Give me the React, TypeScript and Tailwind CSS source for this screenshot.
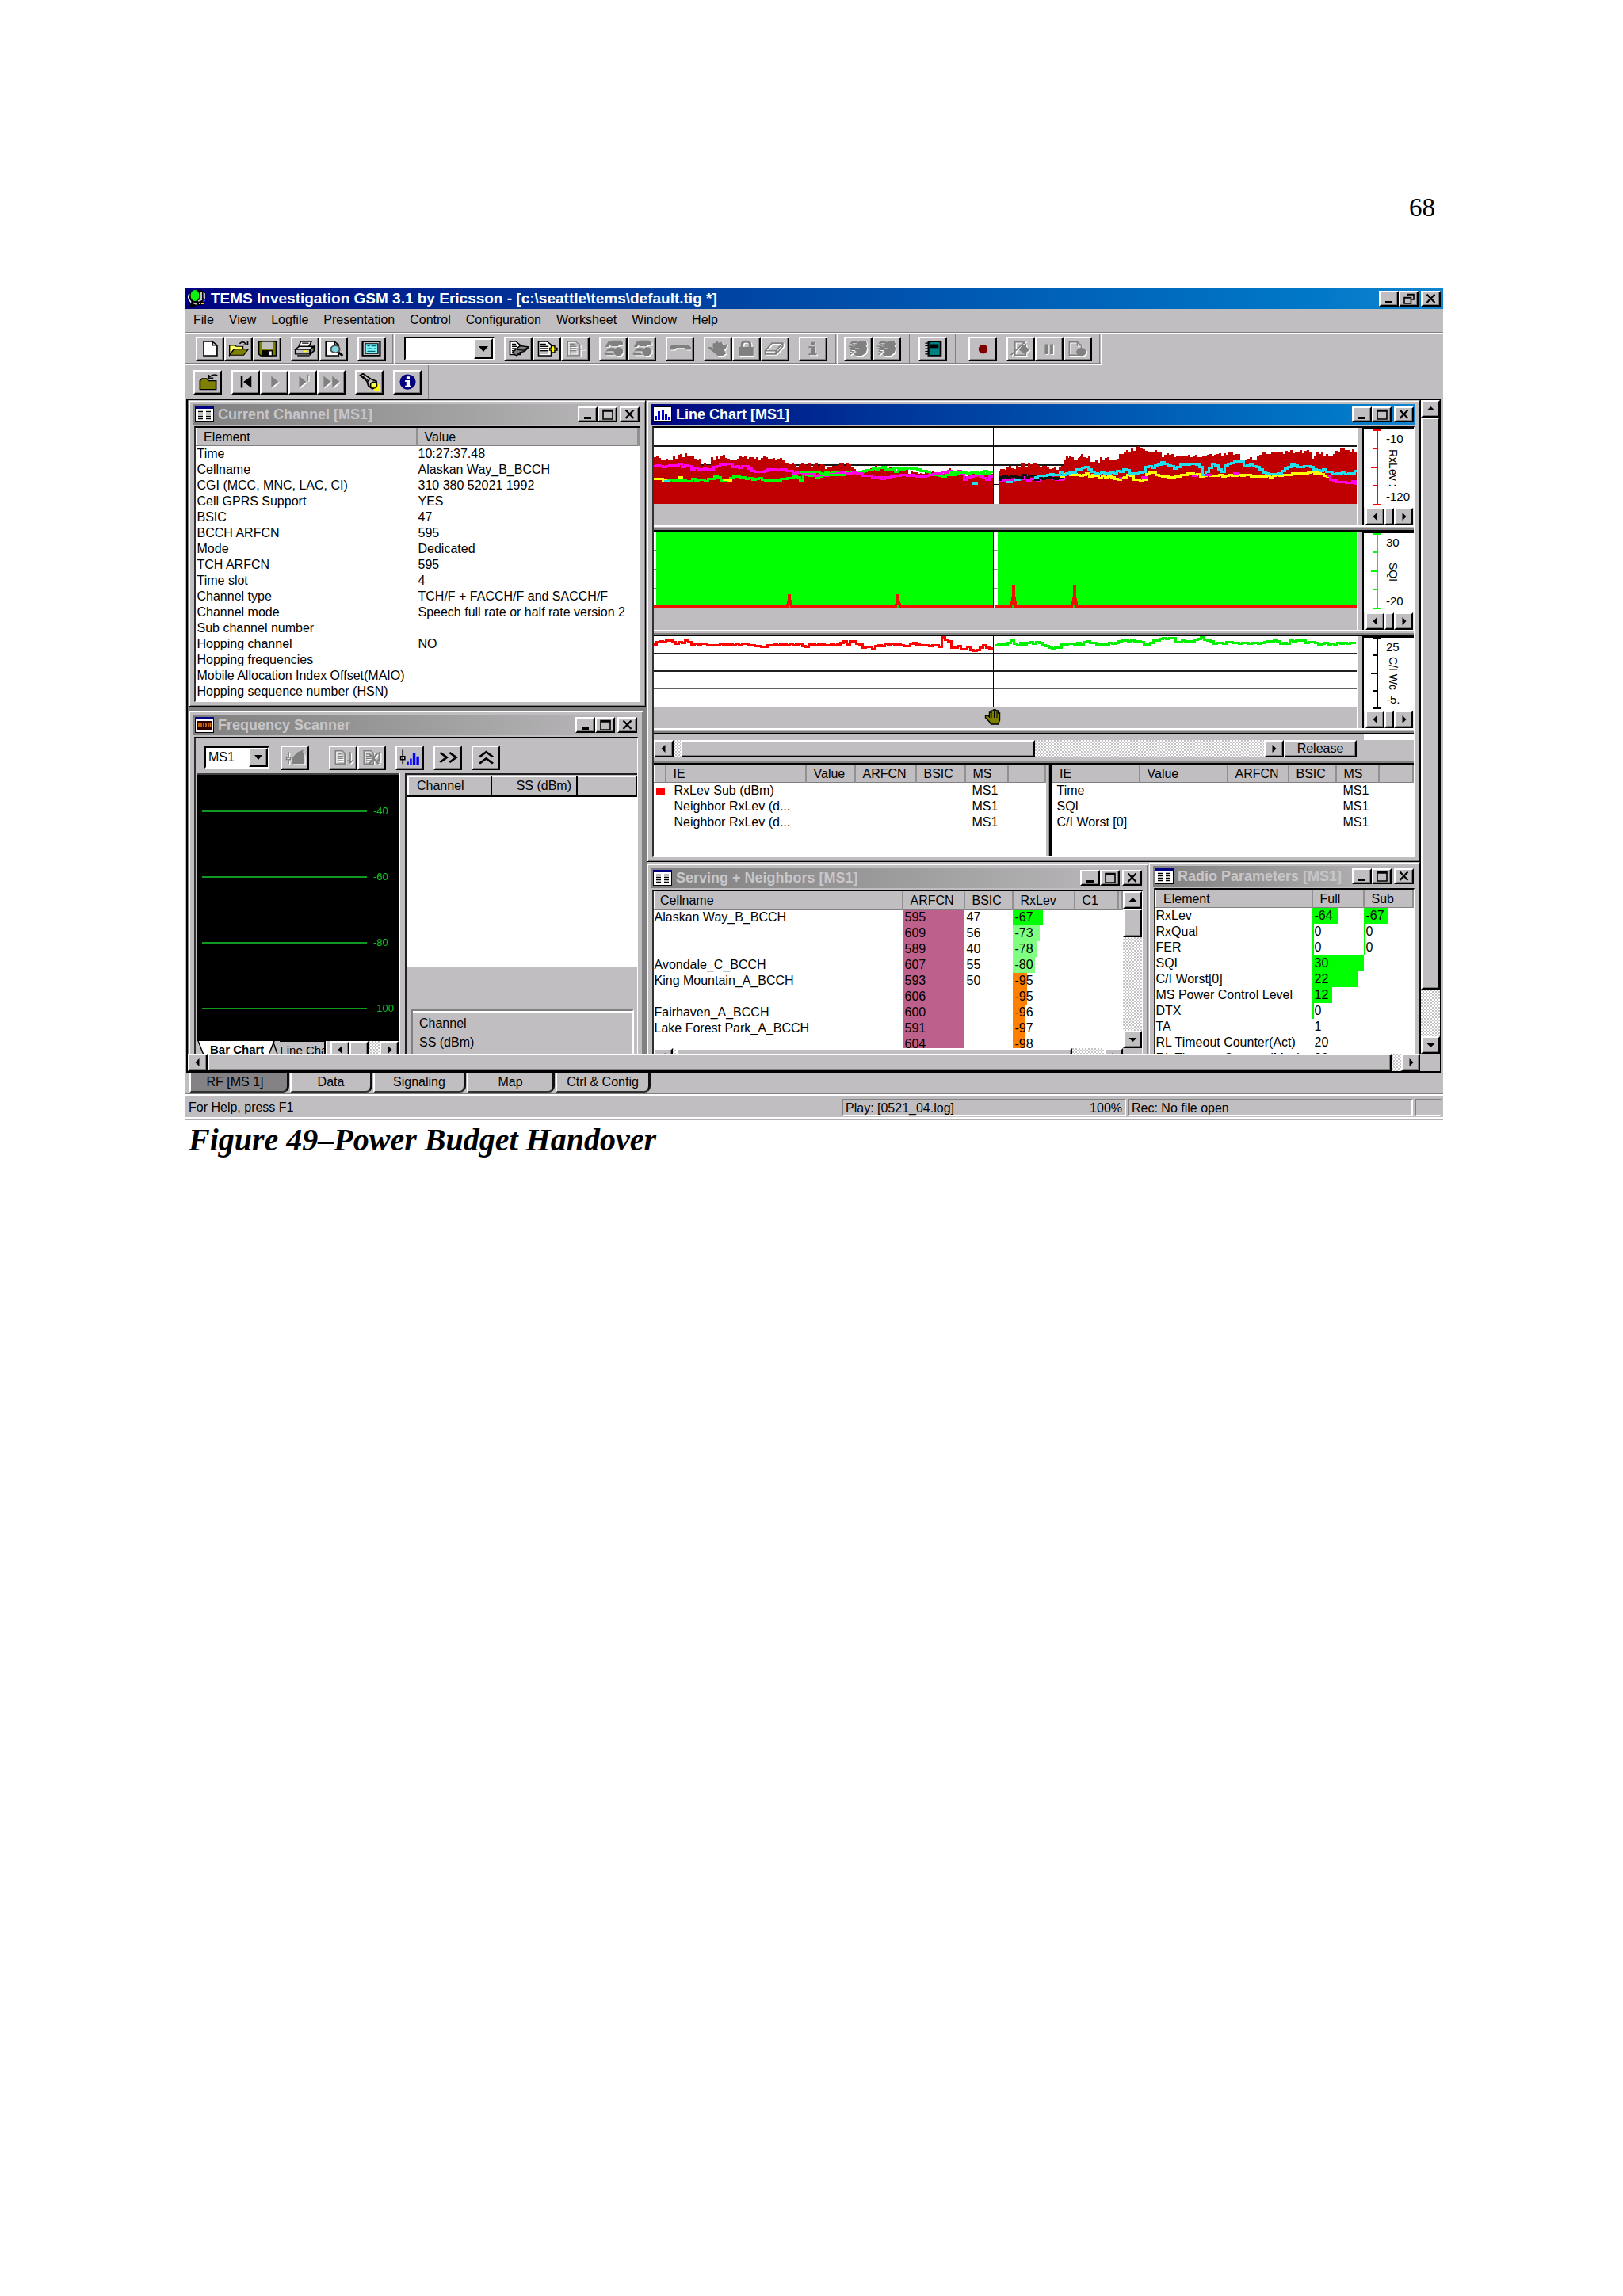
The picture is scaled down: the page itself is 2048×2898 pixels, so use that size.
import React from "react";

type Pt = [number, number];

const RAISED =
  "border-2 border-t-white border-l-white border-b-black border-r-black bg-[#c0bec0] shadow-[inset_-1px_-1px_0_#808080]";
const DITHER =
  "bg-[repeating-conic-gradient(#ffffff_0_25%,#c4c2c4_0_50%)] bg-[length:4px_4px]";

/* ---------- glyphs ---------- */

function Glyph({ children, off = false }: { children: React.ReactNode; off?: boolean }) {
  return (
    <svg width="27" height="22" viewBox="0 0 16 16" preserveAspectRatio="none" aria-hidden="true">
      {off && (
        <g transform="translate(0.8 0.8)" color="#ffffff">
          {children}
        </g>
      )}
      <g color={off ? "#808080" : "#000000"}>{children}</g>
    </svg>
  );
}

const C = "currentColor";

const icons: Record<string, React.ReactNode> = {
  new: <path d="M3 1.500h6.500l3.500 3.500v9.500H3z M9.500 1.500v3.500H13" fill="#fff" stroke="#000" />,
  open: (
    <>
      <path d="M1 5h4l1 1h5v3H4l-3 5z" fill="#ffff60" stroke="#000" strokeWidth=".8" />
      <path d="M1 14l3.500-5.500H15L11.500 14z" fill="#808000" stroke="#000" strokeWidth=".8" />
      <path d="M8.500 3.500q2.500-3 4.500 0M14.500 1.500v3h-3" fill="none" stroke="#000" />
    </>
  ),
  save: (
    <>
      <path d="M1.500 1.500h13v13H3l-1.500-1.500z" fill="#808000" stroke="#000" />
      <path d="M4 2h8v6H4z" fill="#c0c0c0" />
      <path d="M4 9.500h8V15H4z" fill="#000" />
      <path d="M9.500 10.500h1.600V14H9.500z" fill="#fff" />
    </>
  ),
  print: (
    <>
      <path d="M5 1.500h8l-2 5H3.500z" fill="#fff" stroke="#000" />
      <path d="M6 3h5M5.500 4.700h5" stroke="#000" strokeWidth=".8" />
      <path d="M1 8.500l3-2.500h10.500l-2.500 3z" fill="#e0e0e0" stroke="#000" />
      <path d="M1 8.700h11V13H1z" fill="#c0c0c0" stroke="#000" />
      <path d="M12 9l3-3v4l-3 3.500z" fill="#808080" stroke="#000" />
      <path d="M2.500 14.500h9" stroke="#000" />
      <path d="M7.500 10.500h2.500" stroke="#ffff00" strokeWidth="1.200" />
    </>
  ),
  preview: (
    <>
      <path d="M2.500 1.500H9l3 3v10H2.500z M9 1.500v3h3" fill="#fff" stroke="#000" />
      <circle cx="9.500" cy="8.500" r="3.300" fill="#80d8e0" stroke="#505050" strokeWidth="1.200" />
      <path d="M12 11.500l3 3" stroke="#000" strokeWidth="1.800" />
    </>
  ),
  form: (
    <>
      <path d="M1.500 1.500h13v13h-13z" fill="#c0c0c0" stroke="#000" strokeWidth="1.300" />
      <path d="M3.500 3.500h9.500v9H3.500z" fill="#80f4fc" stroke="#000" strokeWidth=".8" />
      <path d="M5 5.500h2M8 5.500h4M5 8h4M10 8h2M5 10.500h6" stroke="#006870" strokeWidth=".9" />
    </>
  ),
  logEdit: (
    <>
      <path d="M1.500 1.500H6l3 3v9H1.500z" fill="#fff" stroke="#000" />
      <path d="M3 4h3M3 6h4M3 8h3M3 10h3M3 12h3" stroke="#000" />
      <path d="M6 8.500l3-3 6.500 1-3 4-3.500 1-2.500 3-1.500-1-1.500-2z" fill="#808080" stroke="#000" />
      <path d="M7 9l5 .5 2.500-2.500" stroke="#000" strokeWidth=".8" fill="none" />
    </>
  ),
  logAdd: (
    <>
      <path d="M1.500 1.500H8l3 3v10H1.500z" fill="#fff" stroke="#000" />
      <path d="M3 4h4M3 6h6M3 8h6M3 10h6M3 12h6" stroke="#000" />
      <path d="M12.500 5v7M9.500 8.500h6.300" stroke="#000" strokeWidth="3" />
      <path d="M12.500 6v5M10.200 8.500h4.600" stroke="#ffff00" strokeWidth="1.300" />
    </>
  ),
  logDel: (
    <>
      <path d="M2 1.500h6l3 3v10H2z" fill="none" stroke={C} />
      <path d="M3.500 4h4M3.500 6h5M3.500 8h5M3.500 10h5M3.500 12h5M9 8.500h6" stroke={C} />
    </>
  ),
  phones: (
    <>
      <path d="M2 5l2-3.500 3-1h6l2 2v2l-3 .5-1 1H7L5 5 4 6.500H2z" fill={C} />
      <path d="M4 7.500h4l2 1-1 2H2zM1 11.500h6v1L9 14H2l-1-1z" fill={C} />
      <path d="M11 6.500l2.500.5L15 9v3l-2 2.500h-3L8 12.500V9z" fill={C} />
    </>
  ),
  hook: <path d="M0 9V6.500L2 4.500h12l2 2V9h-3.500L11 7.500H5L3.500 9z" fill={C} />,
  wave: (
    <path d="M.5 6.500h2.500L4.500 8V3H6l1.500-2L9 2.500 11 2l1 2 1 1.500L15.500 3l-1 4L13 9.500l1.500 3L12 14.500H8l-2.500-2.500L2 8.500z" fill={C} />
  ),
  lock: (
    <>
      <path d="M5 7V4q0-2.500 3-2.500T11 4v3" fill="none" stroke={C} strokeWidth="2" />
      <path d="M2.500 6.500h11v8h-11z" fill={C} />
    </>
  ),
  eraser: <path d="M1 10L6 3h8v3l-5 7H1zM1 10h8l5-7M9 10v3" fill="none" stroke={C} strokeWidth="1.200" />,
  info: <path d="M6.500 2h3v2.500h-3zM5 6h4.500v6.500H11V14H5v-1.500h1.500v-5H5z" fill={C} />,
  globe: (
    <>
      <path d="M2 3l2-2h3l1 1 2-1h4l1 3-1 1 1 3-1 4-3 2.500H6.500L5 13l2-2-1.500-1.500H3L1 8l2-1.500 3-.5z" fill={C} />
      <path d="M1 6h4M2 10l3 1M2 13.500l2.500-2" stroke={C} />
      <path d="M4 3.500h3M6 8h3" stroke="#d8d8d8" strokeWidth=".8" />
    </>
  ),
  book: (
    <>
      <path d="M4.500 1.500h9v13h-9z" fill="#008080" stroke="#000" strokeWidth="1.300" />
      <path d="M6 4h6v3.500H6z" fill="#000" />
      <path d="M2 3h3M2 5.500h3M2 8h3M2 10.500h3M2 13h3" stroke="#000" strokeWidth=".8" />
      <path d="M14.500 1v14" stroke="#a060d0" strokeWidth=".6" />
    </>
  ),
  record: <ellipse cx="8" cy="8.500" rx="3.400" ry="4.300" fill="#800000" />,
  recOpen: (
    <>
      <path d="M4 2h6l2 2v10H4zM1 14L12 1" fill="none" stroke={C} />
      <path d="M10 4l5 5-4 4-4-4z" fill={C} />
    </>
  ),
  pause: <path d="M5 4h2.200v9H5zM9 4h2.200v9H9z" fill={C} />,
  recPage: (
    <>
      <path d="M2 2h6l3 3v9H2zM8 2v3h3" fill="none" stroke={C} />
      <circle cx="11" cy="11" r="3.800" fill={C} />
    </>
  ),
  folder: (
    <>
      <path d="M2 7l1.500-2h3.500L8.500 7H14v8H2z" fill="#808000" stroke="#000" />
      <path d="M9 3.500q3-3 6-1.500M8.500 1.500v3h3.500" fill="none" stroke="#000" />
    </>
  ),
  rewind: <path d="M4 2.500h1.500v11H4zM12 2.500v11L6 8z" fill="#000" />,
  play: <path d="M5.500 2.500L11 8l-5.500 5.500z" fill={C} />,
  playOne: <path d="M5 2.500L10.500 8 5 13.500zM11 2l1-1v6h-1z" fill={C} />,
  forward: <path d="M2 2.500L7.500 8 2 13.500zM8.500 2.500L14 8l-5.500 5.500z" fill={C} />,
  torch: (
    <>
      <path d="M9.500 10h6v6h-4z" fill="#ffff00" />
      <path d="M1 2l2-1.500 6 5 4 2v4l-3 3-3-3-1-4z" fill="#c8c8c0" stroke="#000" strokeWidth="1.200" />
      <path d="M2.500 2.500l5 5M8 6l-1.500 2" stroke="#000" strokeWidth=".8" />
      <ellipse cx="11" cy="11" rx="2.400" ry="2.800" fill="#ffff40" stroke="#000" />
    </>
  ),
  about: (
    <>
      <ellipse cx="8" cy="8" rx="6" ry="7" fill="#000080" />
      <path d="M7 3h2.500v2.300H7zM6 6.500h3.500v5h1V13H6v-1.500h1V8H6z" fill="#fff" />
    </>
  ),
  brush: (
    <>
      <path d="M3 3v5M3 10v4M1.500 8h3v2h-3z" stroke={C} fill="none" />
      <path d="M6 8l4-5 4-2v3l1 2v8H6z" fill={C} />
    </>
  ),
  listDown: (
    <>
      <path d="M2 2h5l2 2v10H2zM3.500 5h3M3.500 7h4M3.500 9h4M3.500 11h4" fill="none" stroke={C} />
      <path d="M13 3v10M11 10.500l2 2.500 2-2.500" fill="none" stroke={C} />
    </>
  ),
  listOff: (
    <>
      <path d="M2 2h5l2 2v10H2zM3.500 5h3M3.500 7h4M3.500 9h4M3.500 11h4" fill="none" stroke={C} />
      <path d="M6 5l7 9M12 4l-6 10M13.500 3v9M12 10l2 2" fill="none" stroke={C} strokeWidth="1.600" />
    </>
  ),
  bars: (
    <>
      <path d="M2.500 1v13M1 7h3v3H1z" fill="#fff" stroke="#000" />
      <path d="M5.500 12h1.500v2.500H5.500zM7.800 9h1.500v5.500H7.800zM10 4h2v10.500h-2zM12.700 7h2v7.500h-2z" fill="#0000ff" />
    </>
  ),
  right2: <path d="M2 3.500L7 8l-5 4.500M9 3.500L14 8l-5 4.500" fill="none" stroke="#000" strokeWidth="1.800" />,
  up2: <path d="M3 7.500L8 3l5 4.500M3 13.500L8 9l5 4.500" fill="none" stroke="#000" strokeWidth="1.800" />,
};

const OFF = new Set([
  "logDel", "phones", "hook", "wave", "lock", "eraser", "info", "globe", "recOpen", "pause",
  "recPage", "play", "playOne", "forward", "brush", "listDown", "listOff",
]);

function ToolButton({ icon, label }: { icon: string; label: string }) {
  return (
    <button aria-label={label} className={`flex h-[31px] w-9 shrink-0 items-center justify-center ${RAISED}`}>
      <Glyph off={OFF.has(icon)}>{icons[icon]}</Glyph>
    </button>
  );
}

function Tools({ items }: { items: [string, string][] }) {
  return (
    <div className="flex">
      {items.map(([icon, label], i) => (
        <ToolButton key={i} icon={icon} label={label} />
      ))}
    </div>
  );
}

function Divider() {
  return <div className="w-[3px] border-l border-r border-l-[#808080] border-r-white" />;
}

const arrowPaths = {
  left: "M8 1v10L3 6z",
  right: "M4 1v10l5-5z",
  up: "M1 8h10L6 3z",
  down: "M1 4h10L6 9z",
};

function Arrow({ dir, className = "h-[22px] w-6" }: { dir: keyof typeof arrowPaths; className?: string }) {
  return (
    <button aria-label={`Scroll ${dir}`} className={`flex shrink-0 items-center justify-center ${RAISED} ${className}`}>
      <svg width="13" height="12" viewBox="0 0 12 12" aria-hidden="true">
        <path d={arrowPaths[dir]} fill="#000" />
      </svg>
    </button>
  );
}

/* ---------- window chrome ---------- */

function CaptionButtons({ restore = false }: { restore?: boolean }) {
  const base = `flex h-5 w-[25px] items-center justify-center ${RAISED}`;
  return (
    <div className="flex shrink-0">
      <button aria-label="Minimize" className={base}>
        <svg width="16" height="14" viewBox="0 0 16 14"><path d="M3 10h9v3H3z" /></svg>
      </button>
      <button aria-label={restore ? "Restore" : "Maximize"} className={base}>
        <svg width="16" height="14" viewBox="0 0 16 14">
          {restore ? (
            <path d="M6 4V1.500h8V8h-3M2 5.500h8.500V13H2zM2 6h8.500M6 2h8" fill="none" stroke="#000" strokeWidth="1.600" />
          ) : (
            <path d="M2 1.500h12V13H2zM2 3h12" fill="none" stroke="#000" strokeWidth="1.600" />
          )}
        </svg>
      </button>
      <button aria-label="Close" className={`ml-[3px] ${base}`}>
        <svg width="16" height="14" viewBox="0 0 16 14">
          <path d="M2.500 1.500l10 10.500M12.500 1.500l-10 10.500" stroke="#000" strokeWidth="2.200" />
        </svg>
      </button>
    </div>
  );
}

function WinIcon({ kind }: { kind: "table" | "scan" | "chart" }) {
  return (
    <svg width="24" height="20" viewBox="0 0 24 20" className="shrink-0" aria-hidden="true">
      <path d="M0 0h24v20H0z" fill="#000" />
      <path d="M1 1h22v18H1z" fill="#fff" />
      {kind !== "chart" && <path d="M0 0h24v3H0z" fill="#000080" />}
      {kind === "table" && (
        <path d="M4 6.500h6M4 9.500h6M4 12.500h6M4 15.500h6M14 6.500h6M14 9.500h6M14 12.500h6M14 15.500h6" stroke="#000" strokeWidth="1.600" />
      )}
      {kind === "scan" && (
        <>
          <path d="M2 5h20v11H2z" fill="#300000" />
          <path d="M5 8v5M8 8v5M11 8v5M14 8v5M17 8v5M19.500 8v5" stroke="#f08000" strokeWidth="1.500" />
        </>
      )}
      {kind === "chart" && <path d="M2 12h3v5H2zM6 6h3v11H6zM11 4h3v13h-3zM15 9h3v8h-3zM19 13h3v4h-3z" fill="#0000d0" />}
    </svg>
  );
}

function Win(props: {
  title: string;
  kind: "table" | "scan" | "chart";
  active?: boolean;
  className?: string;
  children: React.ReactNode;
}) {
  const { title, kind, active, className = "", children } = props;
  return (
    <section
      className={`flex min-w-0 flex-col border border-t-[#c0bec0] border-l-[#c0bec0] border-b-black border-r-black bg-[#c0bec0] px-[5px] pt-1 pb-[5px] shadow-[inset_1px_1px_0_#ffffff,inset_-1px_-1px_0_#808080] ${className}`}
    >
      <header
        className={`flex h-[26px] shrink-0 items-center justify-between pr-0.5 pl-0.5 ${
          active
            ? "bg-linear-to-r from-[#000080] to-[#1084d0] text-white"
            : "bg-linear-to-r from-[#808080] to-[#bcbabc] text-[#c8c6c8]"
        }`}
      >
        <div className="flex min-w-0 items-center gap-[5px]">
          <WinIcon kind={kind} />
          <h2 className="text-lg leading-5 font-bold whitespace-nowrap">{title}</h2>
        </div>
        <CaptionButtons />
      </header>
      <div className="mx-px mt-0.5 flex min-h-0 flex-1 flex-col overflow-hidden border border-t-2 border-l-2 border-t-black border-l-[#303030] border-r-white border-b-white">
        {children}
      </div>
    </section>
  );
}

function Th({ children, className = "pl-[11px]" }: { children?: React.ReactNode; className?: string }) {
  return (
    <th
      scope="col"
      className={`h-[22px] overflow-hidden border-r-2 border-b border-l border-r-[#909090] border-b-[#808080] border-l-white bg-[#c0bec0] p-0 pt-0.5 text-left leading-5 font-normal whitespace-nowrap ${className}`}
    >
      {children}
    </th>
  );
}

/* ---------- current channel ---------- */

const channelRows: [string, string][] = [
  ["Time", "10:27:37.48"],
  ["Cellname", "Alaskan Way_B_BCCH"],
  ["CGI (MCC, MNC, LAC, CI)", "310 380 52021 1992"],
  ["Cell GPRS Support", "YES"],
  ["BSIC", "47"],
  ["BCCH ARFCN", "595"],
  ["Mode", "Dedicated"],
  ["TCH ARFCN", "595"],
  ["Time slot", "4"],
  ["Channel type", "TCH/F + FACCH/F and SACCH/F"],
  ["Channel mode", "Speech full rate or half rate version 2"],
  ["Sub channel number", ""],
  ["Hopping channel", "NO"],
  ["Hopping frequencies", ""],
  ["Mobile Allocation Index Offset(MAIO)", ""],
  ["Hopping sequence number (HSN)", ""],
];

function CurrentChannel() {
  return (
    <Win title="Current Channel [MS1]" kind="table" className="mr-px h-[387px] shrink-0">
      <div className="flex-1 bg-white">
        <table className="w-full table-fixed border-collapse">
          <colgroup>
            <col className="w-[278px]" />
            <col className="w-[279px]" />
            <col />
          </colgroup>
          <thead>
            <tr>
              <Th className="pl-[9px]">Element</Th>
              <Th className="pl-[9px]">Value</Th>
              <Th />
            </tr>
          </thead>
          <tbody>
            {channelRows.map(([k, v]) => (
              <tr key={k}>
                <td className="h-5 p-0 pl-px leading-5 whitespace-nowrap">{k}</td>
                <td className="h-5 p-0 pl-0.5 leading-5 whitespace-nowrap">{v}</td>
                <td />
              </tr>
            ))}
          </tbody>
        </table>
      </div>
    </Win>
  );
}

/* ---------- frequency scanner ---------- */

function FrequencyScanner() {
  return (
    <Win title="Frequency Scanner" kind="scan" className="mr-1 h-[470px] shrink-0">
      <div className="flex h-[44px] shrink-0 items-center pt-1 pl-[11px]">
        <div className="relative">
          <select
            aria-label="Mobile station"
            className="block h-7 w-[82px] appearance-none border-2 border-t-black border-l-black border-r-white border-b-white bg-white pl-[3px] leading-6"
          >
            <option>MS1</option>
          </select>
          <span className={`pointer-events-none absolute top-0.5 right-0.5 flex h-6 w-6 items-center justify-center ${RAISED}`}>
            <svg width="10" height="6" viewBox="0 0 10 6"><path d="M0 0h10L5 6z" /></svg>
          </span>
        </div>
        <div className="ml-[14px] flex">
          <Tools items={[["brush", "Clear display"]]} />
          <div className="w-[25px]" />
          <Tools items={[["listDown", "Import list"], ["listOff", "Remove list"]]} />
          <div className="w-3" />
          <Tools items={[["bars", "Scan settings"]]} />
          <div className="w-3" />
          <Tools items={[["right2", "Show more"]]} />
          <div className="w-3" />
          <Tools items={[["up2", "Collapse"]]} />
        </div>
      </div>
      <div className="flex min-h-0 flex-1">
        <div className="flex w-64 shrink-0 flex-col pl-0.5">
          <div className="flex h-[338px] flex-col border-t-2 border-[#404040] bg-black pt-[37px] text-[13px] text-[#10c020]">
            {["-40", "-60", "-80", "-100"].map((v) => (
              <div key={v} className="flex h-[83px] shrink-0 items-start pl-1.5">
                <div className="mt-[8px] h-0.5 w-[208px] bg-[#109820]" />
                <span className="pl-2 leading-[18px]">{v}</span>
              </div>
            ))}
          </div>
          <div className="flex h-[22px] items-stretch">
            <div className="flex h-[22px] min-w-0 flex-1 overflow-hidden">
              <svg width="16" height="22" viewBox="0 0 16 22" className="shrink-0"><path d="M0 0h16v22H9z" fill="#fff" /><path d="M1 0l8 20" stroke="#000" strokeWidth="1.500" /></svg>
              <span className="bg-white text-[15px] leading-[22px] font-bold whitespace-nowrap">Bar Chart</span>
              <svg width="20" height="22" viewBox="0 0 20 22" className="shrink-0"><path d="M0 0h12L5 22H0z" fill="#fff" /><path d="M13 0L5 20M12 2l7 20" fill="none" stroke="#000" strokeWidth="1.500" /></svg>
              <span className="min-w-0 flex-1 overflow-hidden border-t border-r-2 border-black text-[15px] leading-[22px] whitespace-nowrap">Line Chart</span>
            </div>
            <div className="w-1.5 border-l-2 border-white" />
            <Arrow dir="left" />
            <div className={`w-6 ${RAISED}`} />
            <div className={`w-[14px] ${DITHER}`} />
            <Arrow dir="right" />
          </div>
        </div>
        <div className="w-2 border-l-2 border-white" />
        <div className="flex min-w-0 flex-1 flex-col border-t-2 border-l-2 border-[#202020] pt-0.5 pl-px">
          <div className="flex h-[240px] shrink-0 flex-col bg-white">
            <table className="w-full table-fixed border-collapse">
              <colgroup>
                <col className="w-[105px]" />
                <col className="w-[108px]" />
                <col />
              </colgroup>
              <thead>
                <tr>
                  {["Channel", "SS (dBm)", ""].map((h, i) => (
                    <th
                      key={i}
                      scope="col"
                      className={`h-6 border-t border-r-2 border-b-2 border-l-2 border-t-white border-l-white border-r-black border-b-black bg-[#c0bec0] p-0 leading-[22px] font-normal ${
                        i === 1 ? "pr-[6px] text-right" : "pl-[10px] text-left"
                      }`}
                    >
                      {h}
                    </th>
                  ))}
                </tr>
              </thead>
            </table>
          </div>
          <dl className="mt-[54px] mr-1 ml-[5px] flex-1 border-2 border-b-0 border-[#808080] border-r-white pt-1 pl-2 shadow-[inset_0_2px_0_#ffffff]">
            <dt className="leading-6">Channel</dt>
            <dt className="leading-6">SS (dBm)</dt>
          </dl>
        </div>
      </div>
    </Win>
  );
}

/* ---------- line chart ---------- */

/* Left-hand samples cover the trace up to just past the cursor; right-hand samples the rest. */
const lp = (p: Pt[], y0: number): Pt[] => p.map(([x, y]) => [(x - 42) / 2.8, (y - y0) / 3]);
const rp = (p: Pt[], y0: number): Pt[] => p.map(([x, y]) => [525 + x / 3, (y - y0) / 3]);

/* Resamples a polyline into small steps with a repeatable jitter. */
function steps(points: Pt[], step: number, jitter: number): string {
  const out: string[] = [];
  let seed = 7;
  let i = 0;
  const last = points[points.length - 1][0];
  for (let x = points[0][0]; x <= last; x += step) {
    while (i < points.length - 2 && points[i + 1][0] <= x) i++;
    const [x0, y0] = points[i];
    const [x1, y1] = points[i + 1];
    const t = x1 === x0 ? 0 : (x - x0) / (x1 - x0);
    seed = (seed * 1103515245 + 12345) % 2147483648;
    const y = y0 + (y1 - y0) * Math.min(1, t) + ((seed / 2147483648) * 2 - 1) * jitter;
    out.push(`${out.length ? "L" : "M"}${x.toFixed(0)} ${y.toFixed(0)}H${(x + step).toFixed(0)}`);
  }
  return out.join("");
}

function Trace({ pts, color, jitter = 1.4 }: { pts: Pt[]; color: string; jitter?: number }) {
  return <path d={steps(pts, 4, jitter)} fill="none" stroke={color} strokeWidth="3" />;
}

function Area({ pts }: { pts: Pt[] }) {
  const end = Math.round(pts[pts.length - 1][0]);
  const start = Math.round(pts[0][0]);
  return <path d={`${steps(pts, 3, 2.8)}H${end}V96H${start}Z`} fill="#c00000" />;
}

const area1: Pt[] = [
  [42, 232], [80, 240], [120, 230], [150, 224], [165, 236], [205, 234], [206, 262], [240, 262], [241, 240],
  [288, 230], [300, 236], [365, 236], [435, 234], [450, 240], [497, 238], [498, 255], [525, 260], [545, 270],
  [560, 252], [572, 264], [600, 266], [635, 256], [650, 274], [670, 268], [690, 260], [745, 266], [752, 284],
  [780, 288], [830, 268], [880, 272], [890, 286], [1060, 290], [1080, 274], [1100, 286], [1140, 298], [1240, 302],
];
const area2: Pt[] = [
  [1257, 285], [1300, 266], [1325, 272], [1328, 260], [1425, 262], [1430, 275], [1480, 275], [1485, 255],
  [1510, 230], [1530, 240], [1554, 222],
];
const area3: Pt[] = [
  [0, 228], [20, 245], [45, 222], [75, 235], [90, 255], [120, 238], [125, 245], [180, 235], [200, 217], [225, 207],
  [270, 196], [300, 207], [340, 218], [350, 230], [375, 218], [410, 232], [470, 226], [500, 232], [570, 220],
  [575, 228], [600, 218], [640, 218], [648, 246], [670, 245], [685, 230], [700, 250], [715, 224], [735, 217],
  [800, 216], [835, 212], [910, 212], [918, 235], [930, 226], [960, 217], [985, 230], [1010, 203], [1060, 207],
  [1070, 203], [1088, 212],
];

function PlotFrame({ height, children }: { height: number; children: React.ReactNode }) {
  return (
    <svg
      viewBox={`0 0 888 ${height}`}
      height={height}
      preserveAspectRatio="none"
      className="block min-w-0 flex-1"
      shapeRendering="crispEdges"
      aria-hidden="true"
    >
      {children}
    </svg>
  );
}

function RxLevPlot() {
  const y = 122;
  return (
    <PlotFrame height={123}>
      <path d="M0 0h888v96H0z" fill="#fff" />
      <path d="M0 22h888v2H0zM0 46h888v2H0zM0 70h888v2H0z" fill="#181818" />
      <Area pts={lp(area1, y)} />
      <Area pts={lp(area2, y)} />
      <Area pts={rp(area3, y)} />
      <Trace color="#ffff00" pts={lp([[42, 314], [90, 316], [145, 312]], y)} />
      <Trace color="#00ff00" pts={lp([[90, 320], [240, 318], [262, 306], [285, 320], [330, 304], [370, 312], [400, 316], [500, 318], [540, 305], [563, 320], [566, 292], [620, 308], [650, 290], [740, 292], [790, 285], [850, 272], [900, 285], [940, 271], [980, 282], [1060, 305], [1110, 295], [1180, 290], [1238, 285]], y)} />
      <Trace color="#ffff00" pts={lp([[285, 316], [318, 320]], y)} />
      <Trace color="#ff00e8" pts={lp([[42, 265], [97, 263], [130, 260], [165, 270], [205, 282], [240, 275], [260, 265], [305, 257], [335, 270], [375, 270], [395, 285], [460, 280], [500, 278], [540, 290], [590, 298], [640, 300], [700, 295], [760, 292], [790, 305], [860, 310], [900, 300], [1000, 305], [1050, 290], [1120, 285], [1140, 315], [1185, 297], [1215, 320], [1238, 300]], y)} />
      <path d="M184 55h24l6 4h28M300 50h30M372 56h24M405 58h20" stroke="#00ff00" strokeWidth="3" fill="none" />
      <Trace color="#ff00e8" jitter={2} pts={lp([[1262, 320], [1300, 320], [1340, 308], [1380, 318], [1400, 314], [1490, 312]], y)} />
      <Trace color="#101010" pts={lp([[1257, 316], [1280, 304], [1380, 304], [1395, 315], [1485, 308]], y)} />
      <Trace color="#ffff00" pts={[...lp([[1480, 305], [1500, 292], [1550, 300]], y), ...rp([[0, 295], [50, 295], [100, 305], [180, 313], [230, 300], [240, 318], [285, 322], [290, 292], [400, 308], [450, 292], [500, 303], [620, 300], [760, 307], [800, 298], [920, 290], [960, 300], [985, 306]], y)]} />
      <Trace color="#20e0f0" pts={[...lp([[1390, 308], [1440, 295], [1500, 295], [1550, 278]], y), ...rp([[0, 288], [65, 273], [100, 293], [160, 292], [210, 280], [230, 292], [275, 286], [290, 266], [310, 275], [350, 253], [400, 272], [430, 260], [490, 258], [505, 300], [545, 252], [575, 295], [590, 260], [640, 245], [665, 266], [700, 263], [750, 298], [790, 295], [835, 265], [910, 268], [930, 282], [960, 280], [990, 292], [1070, 295], [1088, 280]], y)]} />
      <Trace color="#ff00e8" pts={rp([[975, 300], [985, 318], [1040, 326], [1088, 328]], y)} />
      <path d="M446 68h8M456 65h8M402 70h7M13 67h7" stroke="#20e0f0" strokeWidth="3" />
      <path d="M588 63h4M616 62h8M680 60h6M697 59h8M732 57h8" stroke="#ff00e8" strokeWidth="3" />
      <path d="M428 52h7v44h-7z" fill="#fff" />
      <path d="M428 0h1v96h-1zM428 71h7v1h-7z" fill="#000" />
      <path d="M0 96h888v27H0z" fill="#bfbdbf" />
    </PlotFrame>
  );
}

function SqiPlot() {
  return (
    <PlotFrame height={124}>
      <path d="M0 0h888v96H0z" fill="#fff" />
      <path d="M3 0h425v96H3zM434 0h454v96H434z" fill="#00ff00" />
      <path d="M0 24h3M0 48h3M0 72h3M428 24h6M428 48h6M428 72h6" stroke="#000" />
      <path d="M0 93h428v3H0zM431 93h457v3H431z" fill="#f01000" />
      <path d="M168 95l3-9v-6h1v6l3 9M305 95l3-9v-6h1v6l3 9M451 95l3-14v-13h1v13l3 14M528 95l3-14v-13h1v13l3 14" fill="#f01000" stroke="#f01000" strokeWidth="3" />
      <path d="M170 93h2v3h-2zM307 93h2v3h-2zM453 93h2v3h-2zM530 93h2v3h-2z" fill="#00e000" />
      <path d="M428 0h1v96h-1z" fill="#000" />
      <path d="M0 96h888v28H0z" fill="#bfbdbf" />
    </PlotFrame>
  );
}

function CiPlot() {
  const y = 910;
  return (
    <PlotFrame height={116}>
      <path d="M0 0h888v89H0z" fill="#fff" />
      <path d="M0 21h888v2H0zM0 43h888v2H0z" fill="#202020" />
      <path d="M0 65h888v2H0z" fill="#606060" />
      <Trace color="#ff0000" pts={lp([[42, 938], [60, 930], [90, 924], [130, 935], [150, 926], [165, 935], [200, 942], [290, 939], [410, 942], [430, 947], [500, 940], [560, 940], [575, 952], [590, 940], [700, 942], [712, 926], [725, 940], [740, 926], [780, 950], [815, 955], [830, 942], [900, 938], [930, 950], [965, 934], [990, 945], [1050, 945], [1060, 914], [1080, 927], [1100, 958], [1115, 942], [1130, 962], [1150, 950], [1165, 968], [1205, 947], [1234, 960]], y)} />
      <Trace color="#00f000" pts={[...lp([[1250, 942], [1290, 938], [1305, 925], [1325, 940], [1385, 932], [1410, 936], [1420, 950], [1475, 950], [1500, 938], [1550, 938]], y), ...rp([[0, 936], [40, 938], [85, 930], [110, 938], [175, 937], [190, 925], [260, 928], [290, 942], [330, 922], [350, 916], [395, 916], [405, 935], [440, 926], [460, 930], [500, 916], [540, 934], [600, 932], [640, 935], [700, 937], [770, 926], [820, 938], [850, 922], [880, 926], [910, 934], [980, 940], [1075, 930], [1086, 955]], y)]} />
      <path d="M428 0h1v89h-1z" fill="#000" />
      <path d="M0 89h888v27H0z" fill="#bfbdbf" />
      <g shapeRendering="auto">
        <path d="M424 108l-5-5v-3h3l2 2v-6h2v-2h3v-1h3v1h3v3h2v9l-2 5h-9z" fill="#808000" stroke="#000" strokeWidth="1.400" />
        <path d="M426.500 95v8M430 94v9M433.500 95v8" stroke="#000" strokeWidth="1" />
      </g>
    </PlotFrame>
  );
}

function Axis(props: { color: string; top: string; name: string; bottom: string; span: number; height: number }) {
  const { color, top, name, bottom, span, height } = props;
  return (
    <div className="flex w-[65px] shrink-0 flex-col border-t-2 border-l-2 border-black bg-white">
      <div className="flex flex-1" style={{ height: height - 25 }}>
        <svg width="28" height={span + 2} viewBox={`0 0 28 ${span + 2}`} className="shrink-0" shapeRendering="crispEdges" aria-hidden="true">
          <path
            d={`M16.500 0V${span}M12 1h9M12 ${span}h9M12 ${span / 4}h5M9 ${span / 2}h8M12 ${(span * 3) / 4}h5`}
            fill="none"
            stroke={color}
            strokeWidth="2"
          />
        </svg>
        <div className="flex flex-col items-start justify-between pt-1 pb-1.5 text-[15px] leading-4">
          <span>{top}</span>
          <span className="ml-[3px] text-sm leading-3 [writing-mode:vertical-rl]">{name}</span>
          <span>{bottom}</span>
        </div>
      </div>
      <div className="flex h-[22px] bg-[#e0dee0] pl-0.5">
        <Arrow dir="left" />
        <div className={`w-3 ${RAISED}`} />
        <Arrow dir="right" />
      </div>
    </div>
  );
}

function PlotRow({ plot, axis }: { plot: React.ReactNode; axis: React.ReactNode }) {
  return (
    <div className="flex">
      <div className="flex min-w-0 flex-1">{plot}</div>
      <div className="w-[7px] shrink-0 border-l-2 border-white" />
      {axis}
    </div>
  );
}

function Splitter() {
  return (
    <div className="h-2 shrink-0 border-t-2 border-b-2 border-t-white border-b-black bg-[#c0bec0] shadow-[inset_0_-2px_0_#808080]" />
  );
}

function IeTable({ cols, rows, mark }: { cols: string[]; rows: [string, string][]; mark?: boolean }) {
  return (
    <table className="w-full table-fixed border-collapse">
      <colgroup>
        {mark && <col className="w-[14px]" />}
        {cols.map((w, i) => (
          <col key={i} className={w} />
        ))}
        <col />
      </colgroup>
      <thead>
        <tr>
          {mark && <Th />}
          {["IE", "Value", "ARFCN", "BSIC", "MS"].map((h) => (
            <Th key={h} className="pl-[9px]">{h}</Th>
          ))}
          <Th />
        </tr>
      </thead>
      <tbody>
        {rows.map(([name, ms], i) => (
          <tr key={i}>
            {mark && (
              <td className="h-5 p-0 pl-0.5">{i === 0 && <div className="h-[9px] w-[11px] bg-[#ff0000]" />}</td>
            )}
            <td className={`h-5 p-0 leading-5 whitespace-nowrap ${mark ? "pl-[11px]" : "pl-1.5"}`}>{name}</td>
            <td />
            <td />
            <td />
            <td className="h-5 p-0 pl-[9px] leading-5">{ms}</td>
            <td />
          </tr>
        ))}
      </tbody>
    </table>
  );
}

function LineChart() {
  return (
    <Win title="Line Chart [MS1]" kind="chart" active>
      <PlotRow plot={<RxLevPlot />} axis={<Axis color="#ff0000" top="-10" name="RxLev :" bottom="-120" span={95} height={123} />} />
      <Splitter />
      <PlotRow plot={<SqiPlot />} axis={<Axis color="#00ff00" top="30" name="SQI" bottom="-20" span={95} height={124} />} />
      <Splitter />
      <PlotRow plot={<CiPlot />} axis={<Axis color="#000000" top="25" name="C/I Wc" bottom="-5." span={89} height={116} />} />
      <Splitter />
      <div className="flex h-[7px] shrink-0 justify-end bg-[#c0bec0]">
        <div className="w-[63px] bg-white" />
      </div>
      <div className="flex h-[22px] shrink-0">
        <Arrow dir="left" className="h-[22px] w-[25px]" />
        <div className={`flex min-w-0 flex-1 ${DITHER}`}>
          <div className={`ml-[9px] w-[60%] ${RAISED}`} />
        </div>
        <Arrow dir="right" className="h-[22px] w-[25px]" />
        <button className={`mr-[72px] w-[92px] text-base leading-[18px] ${RAISED}`}>Release</button>
      </div>
      <div className="h-[9px] shrink-0 border-b-2 border-b-black bg-[#c0bec0] shadow-[inset_0_-2px_0_#808080]" />
      <div className="flex h-[116px] shrink-0 bg-white">
        <div className="w-[495px]">
          <IeTable
            mark
            cols={["w-[177px]", "w-[62px]", "w-[77px]", "w-[62px]", "w-[54px]"]}
            rows={[
              ["RxLev Sub (dBm)", "MS1"],
              ["Neighbor RxLev (d...", "MS1"],
              ["Neighbor RxLev (d...", "MS1"],
            ]}
          />
        </div>
        <div className="w-[7px] border-r-[3px] border-l-2 border-l-[#c0bec0] border-r-black bg-[#909090]" />
        <div className="min-w-0 flex-1">
          <IeTable
            cols={["w-[110px]", "w-[111px]", "w-[77px]", "w-[60px]", "w-[54px]"]}
            rows={[
              ["Time", "MS1"],
              ["SQI", "MS1"],
              ["C/I Worst [0]", "MS1"],
            ]}
          />
        </div>
      </div>
    </Win>
  );
}

/* ---------- serving + neighbors ---------- */

const neighbors: [string, string, string, string, string][] = [
  ["Alaskan Way_B_BCCH", "595", "47", "-67", "w-[38px] bg-[#00ff00]"],
  ["", "609", "56", "-73", "w-[34px] bg-[#80ff80]"],
  ["", "589", "40", "-78", "w-[30px] bg-[#80ff80]"],
  ["Avondale_C_BCCH", "607", "55", "-80", "w-[28px] bg-[#80ff80]"],
  ["King Mountain_A_BCCH", "593", "50", "-95", "w-[18px] bg-[#ff8000]"],
  ["", "606", "", "-95", "w-[18px] bg-[#ff8000]"],
  ["Fairhaven_A_BCCH", "600", "", "-96", "w-[16px] bg-[#ff8000]"],
  ["Lake Forest Park_A_BCCH", "591", "", "-97", "w-[16px] bg-[#ff8000]"],
  ["", "604", "", "-98", "w-[15px] bg-[#ff8000]"],
];

function BarCell({ value, bar }: { value: string; bar: string }) {
  return (
    <td className="h-5 p-0 align-top">
      {value !== "" && (
        <div className={`h-5 overflow-visible pl-[3px] leading-[19px] ${bar}`}>{value}</div>
      )}
    </td>
  );
}

function ServingNeighbors() {
  return (
    <Win title="Serving + Neighbors [MS1]" kind="table" className="mt-0.5 h-[265px] w-[633px] shrink-0">
      <div className="flex h-[198px] shrink-0">
        <div className="min-w-0 flex-1 overflow-hidden bg-white">
          <table className="w-full table-fixed border-collapse">
            <colgroup>
              <col className="w-[313px]" />
              <col className="w-[78px]" />
              <col className="w-[61px]" />
              <col className="w-[78px]" />
              <col className="w-[55px]" />
              <col />
            </colgroup>
            <thead>
              <tr>
                <Th className="pl-[7px]">Cellname</Th>
                {["ARFCN", "BSIC", "RxLev", "C1"].map((h) => (
                  <Th key={h} className="pl-[9px]">{h}</Th>
                ))}
                <Th />
              </tr>
            </thead>
            <tbody>
              {neighbors.map(([name, arfcn, bsic, lev, bar]) => (
                <tr key={arfcn}>
                  <td className="h-5 p-0 align-top leading-[19px] whitespace-nowrap">{name}</td>
                  <td className="h-5 bg-[#be608c] p-0 pl-[3px] align-top leading-[19px]">{arfcn}</td>
                  <td className="h-5 p-0 pl-[3px] align-top leading-[19px]">{bsic}</td>
                  <BarCell value={lev} bar={bar} />
                  <td />
                  <td />
                </tr>
              ))}
            </tbody>
          </table>
        </div>
        <div className={`flex w-6 flex-col ${DITHER}`}>
          <Arrow dir="up" />
          <div className={`h-9 w-6 ${RAISED}`} />
          <div className="flex-1" />
          <Arrow dir="down" />
        </div>
      </div>
      <div className="flex h-[22px] shrink-0">
        <Arrow dir="left" />
        <div className={`flex flex-1 ${DITHER}`}>
          <div className={`ml-1 w-[92%] ${RAISED}`} />
        </div>
        <Arrow dir="right" />
        <div className="w-6" />
      </div>
    </Win>
  );
}

/* ---------- radio parameters ---------- */

const radioRows: [string, string, string, string, string][] = [
  ["RxLev", "-64", "w-[33px] bg-[#00ff00]", "-67", "w-[31px] bg-[#00ff00]"],
  ["RxQual", "0", "border-l-2 border-[#00ff00] pl-px", "0", "border-l-2 border-[#00ff00] pl-px"],
  ["FER", "0", "border-l-2 border-[#00ff00] pl-px", "0", "border-l-2 border-[#00ff00] pl-px"],
  ["SQI", "30", "w-full bg-[#00ff00]", "", ""],
  ["C/I Worst[0]", "22", "w-[58px] bg-[#00ff00]", "", ""],
  ["MS Power Control Level", "12", "w-[25px] bg-[#00ff00]", "", ""],
  ["DTX", "0", "border-l-2 border-[#00ff00] pl-px", "", ""],
  ["TA", "1", "", "", ""],
  ["RL Timeout Counter(Act)", "20", "", "", ""],
  ["RL Timeout Counter(Max)", "20", "", "", ""],
];

function RadioParameters() {
  return (
    <Win title="Radio Parameters [MS1]" kind="table" className="h-[265px] flex-1">
      <div className="flex-1 bg-white">
        <table className="w-full table-fixed border-collapse">
          <colgroup>
            <col className="w-[197px]" />
            <col className="w-[65px]" />
            <col />
          </colgroup>
          <thead>
            <tr>
              {["Element", "Full", "Sub"].map((h) => (
                <Th key={h} className="pl-[9px]">{h}</Th>
              ))}
            </tr>
          </thead>
          <tbody>
            {radioRows.map(([name, full, fullBar, sub, subBar]) => (
              <tr key={name}>
                <td className="h-5 p-0 align-top leading-[19px] whitespace-nowrap">{name}</td>
                <BarCell value={full} bar={fullBar} />
                <BarCell value={sub} bar={subBar} />
              </tr>
            ))}
          </tbody>
        </table>
      </div>
    </Win>
  );
}

/* ---------- application frame ---------- */

const menus: [string, string, string][] = [
  ["", "F", "ile"],
  ["", "V", "iew"],
  ["", "L", "ogfile"],
  ["", "P", "resentation"],
  ["", "C", "ontrol"],
  ["Co", "n", "figuration"],
  ["W", "o", "rksheet"],
  ["", "W", "indow"],
  ["", "H", "elp"],
];

const sheets: [string, string][] = [
  ["RF [MS 1]", "w-[126px] pr-2.5"],
  ["Data", "w-[104px]"],
  ["Signaling", "w-[117px]"],
  ["Map", "w-[111px]"],
  ["Ctrl & Config", "w-[120px]"],
];

function Toolbars() {
  return (
    <div className="h-[83px] border-t border-white">
      <div className="flex h-10 w-[1156px] items-center border-b-2 border-b-white pl-[13px] shadow-[inset_0_-1px_0_#808080]">
        <Tools items={[["new", "New"], ["open", "Open"], ["save", "Save"]]} />
        <div className="w-3" />
        <Tools items={[["print", "Print"], ["preview", "Print preview"]]} />
        <div className="w-3" />
        <Tools items={[["form", "Properties"]]} />
        <div className="ml-2 flex self-stretch"><Divider /></div>
        <div className="relative ml-[12px]">
          <select
            aria-label="Equipment"
            className="block h-[30px] w-[114px] appearance-none border-2 border-t-black border-l-black border-r-white border-b-white bg-white"
          />
          <span className={`pointer-events-none absolute top-0.5 right-0.5 flex h-[26px] w-6 items-center justify-center ${RAISED}`}>
            <svg width="12" height="7" viewBox="0 0 12 7"><path d="M0 0h12L6 7z" /></svg>
          </span>
        </div>
        <div className="w-[13px]" />
        <Tools items={[["logEdit", "Edit logfile"], ["logAdd", "Add log entry"], ["logDel", "Delete log entry"]]} />
        <div className="w-3" />
        <Tools items={[["phones", "Connect all"], ["phones", "Disconnect all"]]} />
        <div className="w-3" />
        <Tools items={[["hook", "Hang up"]]} />
        <div className="w-3" />
        <Tools items={[["wave", "Stop"], ["lock", "Lock"], ["eraser", "Erase"]]} />
        <div className="w-3" />
        <Tools items={[["info", "Information"]]} />
        <div className="ml-[10px] flex self-stretch"><Divider /></div>
        <div className="w-2" />
        <Tools items={[["globe", "Connect position"], ["globe", "Disconnect position"]]} />
        <div className="ml-[10px] flex self-stretch"><Divider /></div>
        <div className="w-[10px]" />
        <Tools items={[["book", "Report"]]} />
        <div className="ml-[10px] flex self-stretch"><Divider /></div>
        <div className="w-[14px]" />
        <Tools items={[["record", "Record"]]} />
        <div className="w-3" />
        <Tools items={[["recOpen", "Open recording"], ["pause", "Pause recording"], ["recPage", "Swap recording"]]} />
        <div className="ml-[9px] flex self-stretch"><Divider /></div>
      </div>
      <div className="flex h-[42px] items-center pl-[10px]">
        <Tools items={[["folder", "Open logfile"]]} />
        <div className="w-3" />
        <Tools items={[["rewind", "Rewind"], ["play", "Play"], ["playOne", "Step"], ["forward", "Fast forward"]]} />
        <div className="w-3" />
        <Tools items={[["torch", "Find"]]} />
        <div className="w-3" />
        <Tools items={[["about", "About"]]} />
        <div className="ml-2 flex self-stretch"><Divider /></div>
      </div>
    </div>
  );
}

function Desktop() {
  return (
    <div className="mr-[3px] ml-px flex h-[851px] flex-col border-t-2 border-r border-b-2 border-l-2 border-black bg-[#c0bec0]">
      <div className="flex h-[825px] overflow-hidden">
        <div className="flex min-w-0 flex-1 overflow-hidden bg-[#808080] pl-px">
          <div className="flex w-[578px] shrink-0 flex-col">
            <CurrentChannel />
            <div className="h-[5px] shrink-0" />
            <FrequencyScanner />
          </div>
          <div className="flex min-w-0 flex-1 flex-col bg-[#c0bec0]">
            <LineChart />
            <div className="flex items-start">
              <ServingNeighbors />
              <RadioParameters />
            </div>
          </div>
        </div>
        <div className={`flex w-[25px] shrink-0 flex-col border-l border-black ${DITHER}`}>
          <Arrow dir="up" className="h-[22px] w-6" />
          <div className={`h-[722px] w-6 ${RAISED}`} />
          <div className="flex-1" />
          <Arrow dir="down" className="h-[22px] w-6" />
        </div>
      </div>
      <div className="flex h-[22px]">
        <Arrow dir="left" className="h-[22px] w-[25px]" />
        <div className={`flex min-w-0 flex-1 ${DITHER}`}>
          <div className={`mr-3 flex-1 ${RAISED}`} />
        </div>
        <Arrow dir="right" className="h-[22px] w-6" />
        <div className="w-[25px]" />
      </div>
    </div>
  );
}

export default function App() {
  return (
    <div className="min-h-[2898px] bg-white pr-[227px] pl-[234px] font-['Liberation_Sans',Arial,sans-serif] text-base text-black">
      <p className="pt-[240px] pr-2.5 text-right font-['Liberation_Serif',serif] text-[33px] leading-[44px]">68</p>
      <main className="mt-20 bg-[#c0bec0]">
        <header className="flex h-[26px] items-center justify-between bg-linear-to-r from-[#000080] to-[#1084d0] pr-[3px] pl-0.5 text-white">
          <div className="flex items-center gap-[5px]">
            <svg width="25" height="24" viewBox="0 0 25 24" aria-hidden="true">
              <path d="M2 12L4 4l5-3h8l6 3v10l-4 3-3-5-2 6H4z" fill="#000" />
              <path d="M3 6q-3 5 1 9l3 4M22 5v7M18 4v9" fill="none" stroke="#fff" strokeWidth="1.500" />
              <path d="M21 3v8M20 15l3-1" stroke="#3040ff" strokeWidth="2" />
              <ellipse cx="10" cy="8" rx="5.500" ry="7" fill="#10f010" />
              <path d="M6 14l6 3 8-4-2 7-6 1-9 3z" fill="#000" />
              <path d="M7 17l5 2M14 15l5-2" stroke="#d0d0d0" strokeWidth="1.500" />
              <path d="M15 18h2M18 18h3" stroke="#ffe000" strokeWidth="2" />
            </svg>
            <h1 className="text-[19px] leading-6 font-bold">TEMS Investigation GSM 3.1 by Ericsson - [c:\seattle\tems\default.tig *]</h1>
          </div>
          <CaptionButtons restore />
        </header>
        <nav className="flex h-[30px] items-center gap-[19px] border-b border-[#808080] pb-0.5 pl-2.5">
          {menus.map(([a, u, b]) => (
            <button key={a + u + b} className="leading-6 whitespace-nowrap">
              {a}
              <span className="underline underline-offset-2">{u}</span>
              {b}
            </button>
          ))}
        </nav>
        <Toolbars />
        <Desktop />
        <div className="flex h-[27px] border-b border-[#808080] pl-[5px]">
          {sheets.map(([s, w], i) => (
            <button
              key={s}
              className={`mr-px h-[25px] rounded-br-lg border-r-[3px] border-b-2 border-l-2 border-r-[#101010] border-b-[#303030] border-l-white leading-[23px] ${w} ${
                i === 0 ? "bg-[#848284]" : "bg-[#c0bec0]"
              }`}
            >
              {s}
            </button>
          ))}
        </div>
        <footer className="flex h-[33px] items-start border-t-2 border-white pt-1 pr-0.5 shadow-[inset_0_-2px_0_#b0aeb0,inset_0_-4px_0_#ffffff]">
          <span className="flex-1 pl-1 leading-[22px]">For Help, press F1</span>
          <div className="flex h-[22px] w-[359px] justify-between border-2 border-t-[#808080] border-l-[#808080] border-r-white border-b-white px-[3px] leading-[19px]">
            <span>Play: [0521_04.log]</span>
            <span>100%</span>
          </div>
          <div className="ml-0.5 h-[22px] w-[360px] border-2 border-t-[#808080] border-l-[#808080] border-r-white border-b-white px-[3px] leading-[19px]">
            Rec: No file open
          </div>
          <div className="ml-0.5 h-[22px] w-[34px] border-2 border-t-[#808080] border-l-[#808080] border-r-[#c0bec0] border-b-white" />
        </footer>
      </main>
      <p className="pl-1 font-['Liberation_Serif',serif] text-[40px] leading-[50px] font-bold italic">
        Figure 49–Power Budget Handover
      </p>
    </div>
  );
}
